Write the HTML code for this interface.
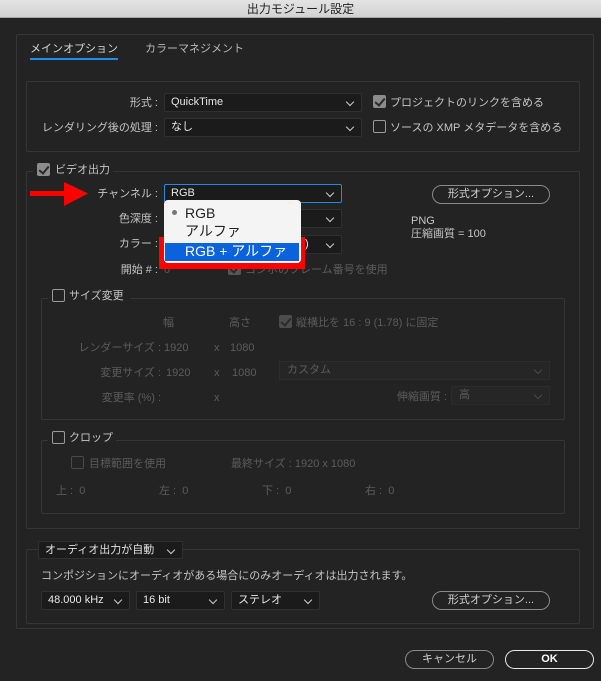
<!DOCTYPE html>
<html><head><meta charset="utf-8"><style>
*{box-sizing:border-box;margin:0;padding:0}
body{width:601px;height:681px;background:#232323;position:relative;overflow:hidden;font-family:"Liberation Sans","Noto Sans CJK JP",sans-serif;font-size:11px;color:#c4c4c4}
.a{position:absolute;white-space:nowrap;line-height:14px}
.box{position:absolute;border:1px solid #363636;border-radius:2px}
.sel{position:absolute;background:#1b1b1b;border:1px solid #303030;border-radius:2px;color:#e6e6e6;padding-left:6px;line-height:17px;font-size:11px}
.sel:after{content:"";position:absolute;right:8px;top:5px;width:5px;height:5px;border-right:1.3px solid #ccc;border-bottom:1.3px solid #ccc;transform:rotate(45deg)}
.dis{color:#5c5c5c}
.dsel{position:absolute;background:#262626;border:1px solid #2c2c2c;color:#5c5c5c;padding-left:7px;line-height:17px}
.dsel:after{content:"";position:absolute;right:8px;top:5px;width:5px;height:5px;border-right:1px solid #4a4a4a;border-bottom:1px solid #4a4a4a;transform:rotate(45deg)}
.cb{position:absolute;width:13px;height:13px;border:1.5px solid #9a9a9a;border-radius:2px}
.cbc{position:absolute;width:13px;height:13px;background:#8c8c8c;border-radius:2px}
.cbc:after{content:"";position:absolute;left:4px;top:1px;width:4px;height:8px;border-right:2px solid #2a2a2a;border-bottom:2px solid #2a2a2a;transform:rotate(40deg)}
.btn{position:absolute;border:1.5px solid #8a8a8a;border-radius:10px;text-align:center;line-height:16px;color:#d0d0d0}
.r{text-align:right}
</style></head><body>
<div class="a" style="left:0;top:0;width:601px;height:18px;background:linear-gradient(#e4e4e4,#d2d2d2);border-bottom:1px solid #aaa;color:#222;text-align:center;line-height:18px;font-size:12px">出力モジュール設定</div>
<div class="box" style="left:16px;top:34px;width:578px;height:595px"></div>
<div class="a" style="left:30px;top:42px;color:#d8d8d8">メインオプション</div>
<div class="a" style="left:30px;top:58px;width:88px;height:2px;background:#1b8cf0"></div>
<div class="a" style="left:145px;top:42px;color:#b8b8b8">カラーマネジメント</div>

<div class="box" style="left:26px;top:81px;width:554px;height:71px"></div>
<div class="a r" style="left:60px;top:96px;width:98px">形式 :</div>
<div class="sel" style="left:164px;top:93px;width:198px;height:19px">QuickTime</div>
<div class="a r" style="left:30px;top:121px;width:128px">レンダリング後の処理 :</div>
<div class="sel" style="left:164px;top:118px;width:198px;height:19px">なし</div>
<div class="cbc" style="left:373px;top:95px"></div>
<div class="a" style="left:390px;top:96px">プロジェクトのリンクを含める</div>
<div class="cb" style="left:373px;top:120px"></div>
<div class="a" style="left:390px;top:121px">ソースの XMP メタデータを含める</div>

<div class="box" style="left:26px;top:171px;width:554px;height:358px"></div>
<div class="a" style="left:33px;top:162px;width:80px;height:16px;background:#232323"></div>
<div class="cbc" style="left:37px;top:163px"></div>
<div class="a" style="left:55px;top:163px">ビデオ出力</div>

<svg class="a" style="left:30px;top:181px" width="60" height="26"><rect x="0" y="10" width="36" height="5" fill="#f00"/><polygon points="34,1 58,12.5 34,25" fill="#f00"/></svg>
<div class="a r" style="left:60px;top:187px;width:98px">チャンネル :</div>
<div class="sel" style="left:164px;top:184px;width:178px;height:19px;border-color:#2f86e0">RGB</div>
<div class="a r" style="left:60px;top:212px;width:98px">色深度 :</div>
<div class="sel" style="left:164px;top:209px;width:178px;height:19px"></div>
<div class="a r" style="left:60px;top:237px;width:98px">カラー :</div>
<div class="sel" style="left:164px;top:235px;width:178px;height:19px;padding-left:140px">)</div>
<div class="a r" style="left:60px;top:263px;width:98px">開始 # :</div>
<div class="a dis" style="left:164px;top:263px">0</div>
<div class="cbc" style="left:228px;top:262px;background:#555"></div>
<div class="a dis" style="left:245px;top:263px">コンポのフレーム番号を使用</div>
<div class="btn" style="left:432px;top:185px;width:118px;height:19px">形式オプション...</div>
<div class="a" style="left:411px;top:215px;line-height:13px">PNG<br>圧縮画質 = 100</div>

<div class="a" style="left:159px;top:237px;width:146px;height:32px;background:#f00"></div>
<div class="a" style="left:164px;top:200px;width:137px;height:63px;background:#f4f4f4;border-radius:4px"></div>
<div class="a" style="left:172px;top:210px;width:5px;height:5px;border-radius:50%;background:#777"></div>
<div class="a" style="left:185px;top:205px;color:#222;font-size:14px;line-height:16px">RGB</div>
<div class="a" style="left:185px;top:223px;color:#222;font-size:14px;line-height:16px">アルファ</div>
<div class="a" style="left:165px;top:243px;width:134px;height:18px;background:#0a63dc;color:#fff;font-size:14px;line-height:17px;padding-left:20px">RGB + アルファ</div>

<div class="box" style="left:41px;top:298px;width:524px;height:122px"></div>
<div class="a" style="left:48px;top:288px;width:82px;height:16px;background:#232323"></div>
<div class="cb" style="left:52px;top:289px"></div>
<div class="a" style="left:69px;top:289px">サイズ変更</div>
<div class="a dis" style="left:163px;top:316px">幅</div>
<div class="a dis" style="left:229px;top:316px">高さ</div>
<div class="cbc" style="left:279px;top:315px;background:#4c4c4c"></div>
<div class="a dis" style="left:296px;top:316px">縦横比を 16 : 9 (1.78) に固定</div>
<div class="a dis r" style="left:40px;top:341px;width:121px">レンダーサイズ :</div>
<div class="a dis" style="left:164px;top:341px">1920</div><div class="a dis" style="left:214px;top:341px">x</div><div class="a dis" style="left:230px;top:341px">1080</div>
<div class="a dis r" style="left:40px;top:366px;width:121px">変更サイズ :</div>
<div class="a dis" style="left:166px;top:366px">1920</div><div class="a dis" style="left:214px;top:366px">x</div><div class="a dis" style="left:232px;top:366px">1080</div>
<div class="dsel" style="left:279px;top:361px;width:271px;height:19px">カスタム</div>
<div class="a dis r" style="left:40px;top:391px;width:121px">変更率 (%) :</div>
<div class="a dis" style="left:214px;top:391px">x</div>
<div class="a dis r" style="left:360px;top:390px;width:87px">伸縮画質 :</div>
<div class="dsel" style="left:451px;top:386px;width:99px;height:19px">高</div>

<div class="box" style="left:41px;top:440px;width:524px;height:74px"></div>
<div class="a" style="left:48px;top:430px;width:68px;height:16px;background:#232323"></div>
<div class="cb" style="left:52px;top:431px"></div>
<div class="a" style="left:69px;top:431px">クロップ</div>
<div class="cb" style="left:71px;top:456px;border-color:#4a4a4a"></div>
<div class="a dis" style="left:89px;top:457px">目標範囲を使用</div>
<div class="a dis" style="left:231px;top:457px">最終サイズ : 1920 x 1080</div>
<div class="a dis" style="left:56px;top:484px">上 :&nbsp; 0</div>
<div class="a dis" style="left:159px;top:484px">左 :&nbsp; 0</div>
<div class="a dis" style="left:262px;top:484px">下 :&nbsp; 0</div>
<div class="a dis" style="left:365px;top:484px">右 :&nbsp; 0</div>

<div class="box" style="left:26px;top:549px;width:554px;height:75px"></div>
<div class="sel" style="left:38px;top:541px;width:145px;height:18px;color:#e0e0e0">オーディオ出力が自動</div>
<div class="a" style="left:41px;top:569px">コンポジションにオーディオがある場合にのみオーディオは出力されます。</div>
<div class="sel" style="left:41px;top:591px;width:89px;height:19px">48.000 kHz</div>
<div class="sel" style="left:136px;top:591px;width:89px;height:19px">16 bit</div>
<div class="sel" style="left:231px;top:591px;width:89px;height:19px">ステレオ</div>
<div class="btn" style="left:432px;top:591px;width:118px;height:19px">形式オプション...</div>

<div class="btn" style="left:405px;top:650px;width:89px;height:19px">キャンセル</div>
<div class="btn" style="left:505px;top:650px;width:89px;height:19px;border-color:#e8e8e8;color:#fff;font-weight:bold">OK</div>
</body></html>
